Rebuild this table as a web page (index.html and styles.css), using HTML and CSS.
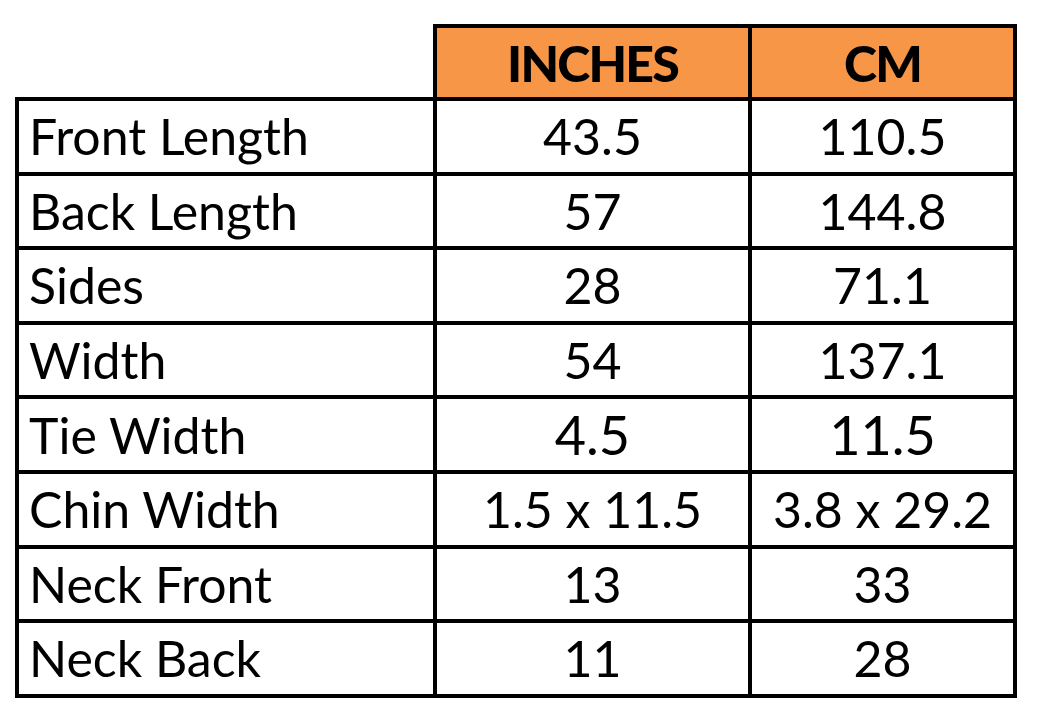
FILE: index.html
```html
<!DOCTYPE html>
<html>
<head>
<meta charset="utf-8">
<link rel="stylesheet" href="styles.css">
</head>
<body>
<table class="size-table">
  <colgroup>
    <col class="c-label">
    <col class="c-in">
    <col class="c-cm">
  </colgroup>
  <thead>
    <tr class="head-row">
      <th class="blank"></th>
      <th class="unit">INCHES</th>
      <th class="unit">CM</th>
    </tr>
  </thead>
  <tbody>
    <tr><td class="label">Front Length</td><td class="val">43.5</td><td class="val">110.5</td></tr>
    <tr><td class="label">Back Length</td><td class="val">57</td><td class="val">144.8</td></tr>
    <tr><td class="label">Sides</td><td class="val">28</td><td class="val">71.1</td></tr>
    <tr><td class="label">Width</td><td class="val">54</td><td class="val">137.1</td></tr>
    <tr><td class="label">Tie Width</td><td class="val big">4.5</td><td class="val big">11.5</td></tr>
    <tr><td class="label">Chin Width</td><td class="val">1.5 x 11.5</td><td class="val">3.8 x 29.2</td></tr>
    <tr><td class="label">Neck Front</td><td class="val">13</td><td class="val">33</td></tr>
    <tr><td class="label">Neck Back</td><td class="val">11</td><td class="val">28</td></tr>
  </tbody>
</table>
</body>
</html>
```
FILE: styles.css
```css
html, body {
  margin: 0;
  padding: 0;
  background: #ffffff;
}
body {
  padding: 24px 0 0 15px;
  font-family: Lato, "Open Sans", sans-serif;
  color: #000;
}
.size-table {
  border-collapse: collapse;
  table-layout: fixed;
  width: 1002px;
}
.c-label { width: 418px; }
.c-in { width: 315px; }
.c-cm { width: 265px; }
.size-table th,
.size-table td {
  border: 4px solid #000;
  padding: 0;
  line-height: 1;
  vertical-align: middle;
}
.size-table th.blank {
  border: none;
  background: #fff;
}
.head-row th { height: 69px; }
.size-table tbody td { height: 70.6px; }
.unit {
  background: #f79646;
  font-weight: 900;
  font-size: 50px;
  letter-spacing: -1.8px;
  text-align: center;
  padding-top: 2px;
}
.label {
  font-size: 50px;
  text-align: left;
  padding-left: 10px !important;
}
.val {
  font-size: 50px;
  text-align: center;
}
.val.big {
  font-size: 54px;
}
```
